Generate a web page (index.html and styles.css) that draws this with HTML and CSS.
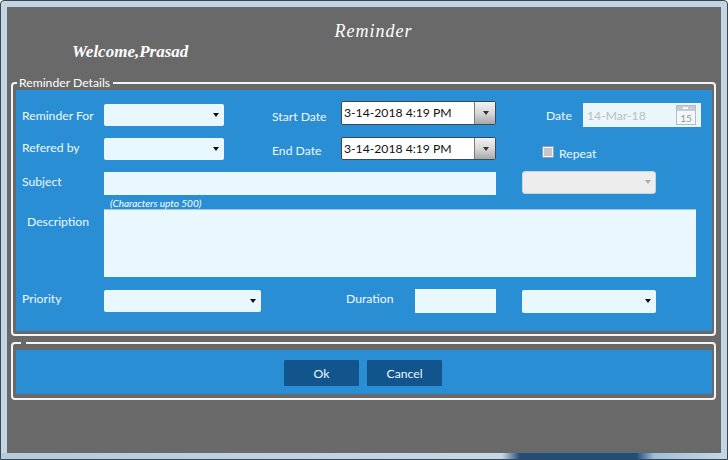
FILE: index.html
```html
<!DOCTYPE html>
<html>

<head>
  <title>Reminder</title>
  <link rel="stylesheet" href="styles.css">
</head>

<body>
  <div class="window">
    <div class="dialog">
      <div class="header">
        <div class="title">Reminder</div>
        <div class="welcome">Welcome,Prasad</div>
      </div>

      <fieldset class="group">
        <legend class="group-name">Reminder Details</legend>
        <div class="panel form-panel">
          <div class="row row-first">
            <label class="label label-first top-7">Reminder For</label>
            <div class="combo combo-short top-3"><span class="arrow"></span></div>
            <label class="label label-date start-label top-8">Start Date</label>
            <div class="picker">
              <span class="picker-text">3-14-2018 4:19 PM</span>
              <span class="picker-btn"><span class="arrow arrow-grey"></span></span>
            </div>
            <label class="label date-label top-7">Date</label>
            <div class="date-box top-2">
              <span>14-Mar-18</span>
              <svg class="cal" width="20" height="20" viewBox="0 0 20 20">
                <rect x="0.5" y="0.5" width="19" height="19" fill="#f4f7f9" stroke="#b4bcc4" />
                <rect x="1" y="1" width="18" height="5" fill="#c4ccd6" />
                <rect x="7" y="2" width="5" height="2" fill="#f4f7f9" />
                <text x="10" y="17" class="cal-day">15</text>
              </svg>
            </div>
          </div>

          <div class="row row-second">
            <label class="label label-first top-3">Refered by</label>
            <div class="combo combo-short top-1"><span class="arrow"></span></div>
            <label class="label label-date start-label top-6">End Date</label>
            <div class="picker picker-low">
              <span class="picker-text">3-14-2018 4:19 PM</span>
              <span class="picker-btn"><span class="arrow arrow-grey"></span></span>
            </div>
            <span class="check"></span>
            <label class="label repeat-label top-9">Repeat</label>
          </div>

          <div class="row row-third">
            <label class="label label-first top-3">Subject</label>
            <input class="field field-subject top-1" type="text">
            <div class="combo combo-off combo-side"><span class="arrow arrow-off"></span></div>
          </div>

          <div class="hint">(Characters upto 500)</div>

          <div class="row row-desc">
            <label class="label label-first label-desc top-5">Description</label>
            <textarea class="field field-desc"></textarea>
          </div>

          <div class="row row-last">
            <label class="label label-first top-2">Priority</label>
            <div class="combo combo-priority top-1"><span class="arrow"></span></div>
            <label class="label duration-label top-2">Duration</label>
            <input class="field field-duration" type="text">
            <div class="combo combo-side top-1"><span class="arrow"></span></div>
          </div>
        </div>
      </fieldset>

      <fieldset class="group group-bottom">
        <legend class="group-gap"></legend>
        <div class="panel button-panel">
          <button class="btn" type="button">Ok</button>
          <button class="btn" type="button">Cancel</button>
        </div>
      </fieldset>
    </div>
  </div>
</body>

</html>
```

FILE: styles.css
```css
* {
  box-sizing: border-box;
}

html,
body {
  margin: 0;
  padding: 0;
  width: 728px;
  height: 460px;
  overflow: hidden;
}

body {
  font-family: Lato, Arial, sans-serif;
  font-size: 12.2px;
  color: #eef8fd;
}

.window {
  width: 728px;
  height: 460px;
  padding: 7px;
  border: 1px solid #3a4650;
  border-radius: 4px 4px 0 0;
  background-color: #c3d5e3;
  background-image: linear-gradient(90deg, #b4cbdc 0, #c6d8e6 69%, #1f4e7d 71.5%, #1f4e7d 87.5%, #9fc0d8 90%, #c6d8e6 100%);
  background-size: 100% 6px;
  background-position: bottom;
  background-repeat: no-repeat;
}

.dialog {
  width: 714px;
  height: 446px;
  margin: -1px;
  padding: 0 4px;
  background-color: #696969;
}

.header {
  height: 69px;
  padding-top: 15px;
}

.title {
  font-family: "Liberation Serif", serif;
  font-style: italic;
  font-size: 18px;
  line-height: 18px;
  letter-spacing: 1px;
  text-align: center;
  padding-left: 19px;
  color: #fff;
}

.welcome {
  font-family: "Liberation Serif", serif;
  font-style: italic;
  font-weight: bold;
  font-size: 17px;
  line-height: 20px;
  margin: 2px 0 0 61px;
  color: #fff;
}

.group {
  margin: 0;
  padding: 0 2px 0 3px;
  width: 705px;
  height: 260px;
  border: 2px solid #f4f4f4;
  border-radius: 4px;
  min-width: 0;
}

.group-name {
  margin-left: 1px;
  padding: 0 3px 0 2px;
  font-size: 12.2px;
  line-height: 14px;
  color: #fff;
}

.group-gap {
  width: 5px;
  height: 6px;
  margin-left: 5px;
  padding: 0;
}

.group-bottom {
  height: 60px;
  margin-top: 4px;
  padding-top: 4px;
}

.panel {
  background-color: #2a8ed5;
}

.form-panel {
  width: 696px;
  height: 241px;
  margin-top: 0;
  padding-top: 11px;
}

.button-panel {
  width: 696px;
  height: 44px;
  padding-top: 10px;
  display: flex;
  justify-content: flex-start;
  gap: 8px;
  padding-left: 268px;
}

.row {
  display: flex;
  align-items: flex-start;
}

.row-first {
  height: 36px;
}

.row-second {
  height: 34px;
}

.row-third {
  height: 27px;
}

.row-desc {
  height: 80px;
}

.row-last {
  height: 24px;
}

.top-1 {
  margin-top: 1px;
}

.top-2 {
  margin-top: 2px;
}

.top-3 {
  margin-top: 3px;
}

.top-5 {
  margin-top: 5px;
}

.top-6 {
  margin-top: 6px;
}

.top-7 {
  margin-top: 7px;
}

.top-8 {
  margin-top: 8px;
}

.top-9 {
  margin-top: 9px;
}

.label {
  display: block;
  line-height: 16px;
  white-space: nowrap;
}

.label-first {
  width: 88px;
  padding-left: 6px;
}

.label-desc {
  padding-left: 11px;
}

.label-date {
  width: 69px;
}

.start-label {
  margin-left: 48px;
}

.date-label {
  width: 37px;
  margin-left: 50px;
}

.duration-label {
  width: 69px;
  margin-left: 85px;
}

.repeat-label {
  margin-left: 5px;
}

.combo {
  position: relative;
  height: 22px;
  background-color: #e9f8fe;
  border-radius: 2px;
}

.combo-short {
  width: 120px;
}

.combo-priority {
  width: 157px;
}

.combo-side {
  width: 134px;
  height: 23px;
  margin-left: 26px;
}

.combo-off {
  background-color: #ededed;
  border: 1px solid #c9d3da;
  border-radius: 3px;
}

.arrow {
  position: absolute;
  top: 9px;
  right: 5.5px;
  border-top: 4px solid #111;
  border-left: 3.5px solid transparent;
  border-right: 3.5px solid transparent;
}

.arrow-off {
  top: 8px;
  right: 4px;
  border-top-color: #aaa;
}

.arrow-grey {
  top: 9px;
  right: 6px;
  border-top-color: #333;
}

.picker {
  display: flex;
  width: 155px;
  height: 24px;
  background-color: #fff;
  border: 1px solid #39495a;
  border-radius: 2px;
  color: #111;
}

.picker-low {
  height: 23px;
}

.picker-text {
  flex: 1;
  padding-left: 2px;
  line-height: 22px;
  white-space: nowrap;
}

.picker-btn {
  position: relative;
  width: 21px;
  background: linear-gradient(#f2f2f2, #d8d8d8 50%, #a8a8a8);
  border-left: 1px solid #7a7a7a;
}

.date-box {
  display: flex;
  align-items: center;
  justify-content: space-between;
  width: 118px;
  height: 24px;
  padding: 0 5px 0 4px;
  background-color: #eaf6fc;
  color: #b9bec2;
}

.cal-day {
  font-family: Lato, Arial, sans-serif;
  font-size: 10px;
  fill: #8e979f;
  text-anchor: middle;
}

.check {
  width: 12px;
  height: 12px;
  margin: 9px 0 0 46px;
  background-color: #c6c6c6;
  border: 2px solid #f1f4f6;
  outline: 1px solid #8ea3b3;
  outline-offset: -1px;
}

.field {
  display: block;
  height: 23px;
  margin-bottom: 0;
  padding: 2px;
  background-color: #e9f8fe;
  border: none;
  border-radius: 0;
  outline: none;
  font-family: inherit;
  resize: none;
}

.field-subject {
  width: 392px;
}

.field-desc {
  width: 592px;
  height: 68px;
  border-top: 1px solid #9cc8e6;
}

.field-duration {
  width: 81px;
  height: 24px;
}

.hint {
  height: 11px;
  padding-left: 94px;
  font-size: 10px;
  font-style: italic;
  line-height: 11px;
  color: #fff;
}

.btn {
  width: 75px;
  height: 26px;
  padding: 0;
  background-color: #12548c;
  border: none;
  border-radius: 1px;
  font-family: inherit;
  font-size: 12.2px;
  color: #eef8fd;
}
```
